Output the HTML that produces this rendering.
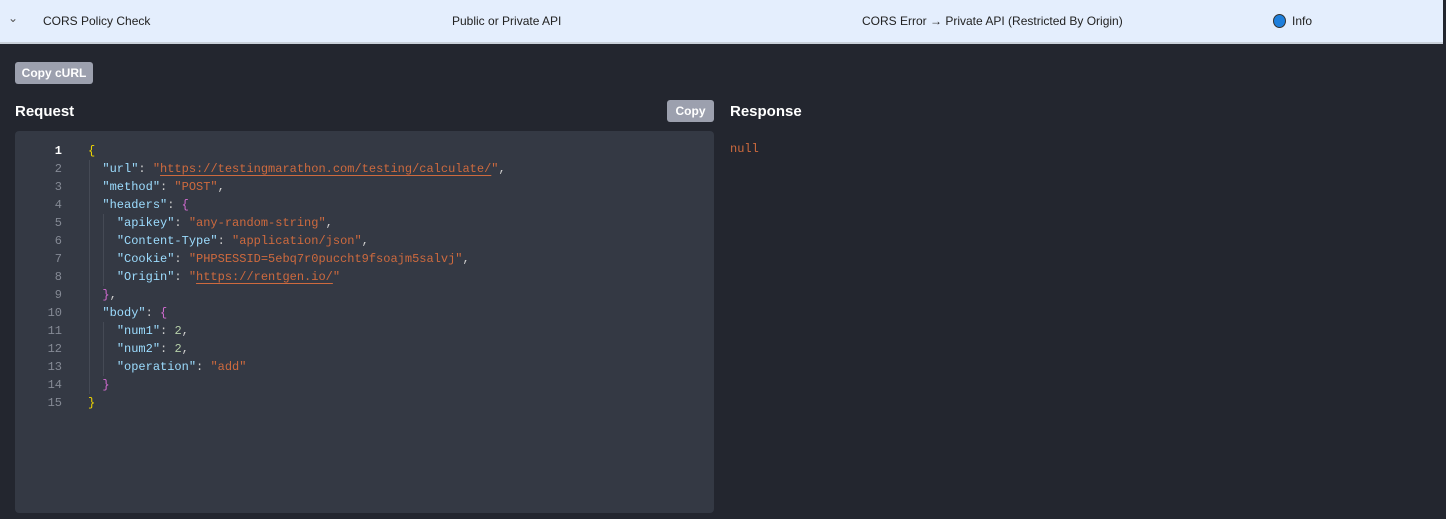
<!DOCTYPE html>
<html><head><style>
*{margin:0;padding:0;box-sizing:border-box}
body{width:1446px;height:519px;background:#23262f;font-family:"Liberation Sans",sans-serif;overflow:hidden;position:relative}
.hdr{position:absolute;left:0;top:0;width:1443px;height:44px;background:#e4eefd;border-bottom:2px solid #c9d0da;font-size:12px;color:#222}
.hdr span{position:absolute;top:14px}
.btn{position:absolute;background:#9ca0ae;color:#fff;font-weight:bold;font-size:12px;border-radius:3px;text-align:center}
.h{position:absolute;color:#fff;font-weight:bold;font-size:15px}
.ed{position:absolute;left:15px;top:131px;width:699px;height:382px;background:#343944;border-radius:4px}
.code{position:absolute;left:0;top:142px;font-family:"Liberation Mono",monospace;font-size:12px;line-height:18px;white-space:pre;color:#ccc}
.ln{position:absolute;left:30px;width:32px;text-align:right;color:#858a95}
.k{color:#9cdcfe}.s{color:#ce6a3e}.n{color:#b5cea8}.y{color:#f1d700}.p{color:#d36bd1}
.u{text-decoration:underline;text-underline-offset:3px}
.guide{position:absolute;width:1px;background:#454a55}
</style></head><body>
<div class="hdr">
<span style="left:8px;top:11px;color:#555">&#8964;</span>
<span style="left:43px">CORS Policy Check</span>
<span style="left:452px">Public or Private API</span>
<span style="left:862px">CORS Error → Private API (Restricted By Origin)</span>
<span style="left:1273px;top:14px;width:13px;height:14px;border-radius:50%;background:#1e7fdc;border:1px solid #333"></span>
<span style="left:1292px">Info</span>
</div>
<div class="btn" style="left:15px;top:62px;width:78px;height:22px;line-height:22px">Copy cURL</div>
<div class="h" style="left:15px;top:103px">Request</div>
<div class="btn" style="left:667px;top:100px;width:47px;height:22px;line-height:22px">Copy</div>
<div class="h" style="left:730px;top:103px">Response</div>
<div style="position:absolute;left:730px;top:142px;font-family:'Liberation Mono',monospace;font-size:12px;color:#ce6a3e">null</div>
<div class="ed"></div>
<div class="guide" style="left:89px;top:160px;height:234px"></div>
<div class="guide" style="left:103px;top:214px;height:72px"></div>
<div class="guide" style="left:103px;top:322px;height:54px"></div>
<div class="ln code" style="top:142px"><b style="color:#fff">1</b>
2
3
4
5
6
7
8
9
10
11
12
13
14
15</div>
<div class="code" style="left:88px"><span class="y">{</span>
  <span class="k">"url"</span>: <span class="s">"<span class="u">https://testingmarathon.com/testing/calculate/</span>"</span>,
  <span class="k">"method"</span>: <span class="s">"POST"</span>,
  <span class="k">"headers"</span>: <span class="p">{</span>
    <span class="k">"apikey"</span>: <span class="s">"any-random-string"</span>,
    <span class="k">"Content-Type"</span>: <span class="s">"application/json"</span>,
    <span class="k">"Cookie"</span>: <span class="s">"PHPSESSID=5ebq7r0puccht9fsoajm5salvj"</span>,
    <span class="k">"Origin"</span>: <span class="s">"<span class="u">https://rentgen.io/</span>"</span>
  <span class="p">}</span>,
  <span class="k">"body"</span>: <span class="p">{</span>
    <span class="k">"num1"</span>: <span class="n">2</span>,
    <span class="k">"num2"</span>: <span class="n">2</span>,
    <span class="k">"operation"</span>: <span class="s">"add"</span>
  <span class="p">}</span>
<span class="y">}</span></div>
</body></html>
